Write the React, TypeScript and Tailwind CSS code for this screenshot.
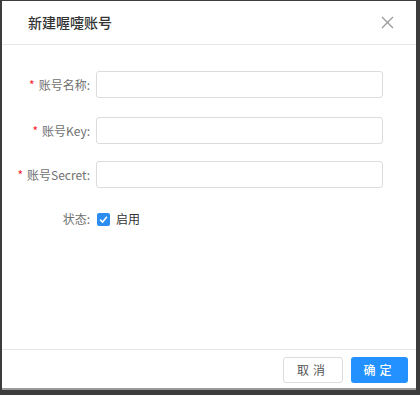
import React from 'react';

const font = { fontFamily: '"Noto Sans CJK SC", "Noto Sans", sans-serif' };

function Field({ label, required }: { label: string; required?: boolean }) {
  return (
    <div className="flex items-center">
      <div className="w-[94px] pr-[6px] text-right text-[12px] text-[#707070]">
        {required && <span className="mr-[4px] text-[#f5222d]">*</span>}
        {label}
      </div>
      <div className="h-[27px] w-[287px] rounded-[3px] border border-[#dcdcdc] bg-white" />
    </div>
  );
}

export default function App() {
  return (
    <div
      className="h-[395px] w-[420px] bg-[#3c3c3c] pb-[5px] pl-[2px] pr-[4px] pt-[1px]"
      style={font}
    >
      <div className="flex h-full w-full flex-col border-b-2 border-[#9a9a9a] bg-white">
        <div className="flex h-[44px] shrink-0 items-center justify-between border-b border-[#e6e6e6] pl-[26px] pr-[22px]">
          <span className="text-[14px] font-medium text-[#333]">新建喔嚏账号</span>
          <svg width="13" height="13" viewBox="0 0 13 13" className="text-[#999]">
            <path d="M1 1 L12 12 M12 1 L1 12" stroke="currentColor" strokeWidth="1.3" fill="none" />
          </svg>
        </div>

        <div className="flex flex-1 flex-col gap-[19px] pt-[26px]">
          <Field label="账号名称:" required />
          <Field label="账号Key:" required />
          <div className="-mt-[2px]">
            <Field label="账号Secret:" required />
          </div>
          <div className="mt-[3px] flex items-center">
            <div className="w-[94px] pr-[6px] text-right text-[12px] text-[#707070]">状态:</div>
            <div className="flex items-center gap-[6px] pl-[1px]">
              <span className="flex h-[13px] w-[13px] items-center justify-center rounded-[2px] bg-[#2d8cf0]">
                <svg width="9" height="9" viewBox="0 0 9 9">
                  <path d="M1.2 4.6 L3.6 7 L7.9 1.8" stroke="white" strokeWidth="1.6" fill="none" />
                </svg>
              </span>
              <span className="text-[12px] text-[#333]">启用</span>
            </div>
          </div>
        </div>

        <div className="flex h-[39px] shrink-0 items-start justify-end gap-[8px] border-t border-[#e6e6e6] pr-[8px] pt-[7px]">
          <button className="h-[26px] w-[60px] rounded-[3px] border border-[#dcdcdc] bg-white text-[12px] tracking-[4px] text-[#555]">
            取消
          </button>
          <button className="h-[26px] w-[57px] rounded-[3px] bg-[#2391ff] text-[12px] font-medium tracking-[4px] text-white">
            确定
          </button>
        </div>
      </div>
    </div>
  );
}
